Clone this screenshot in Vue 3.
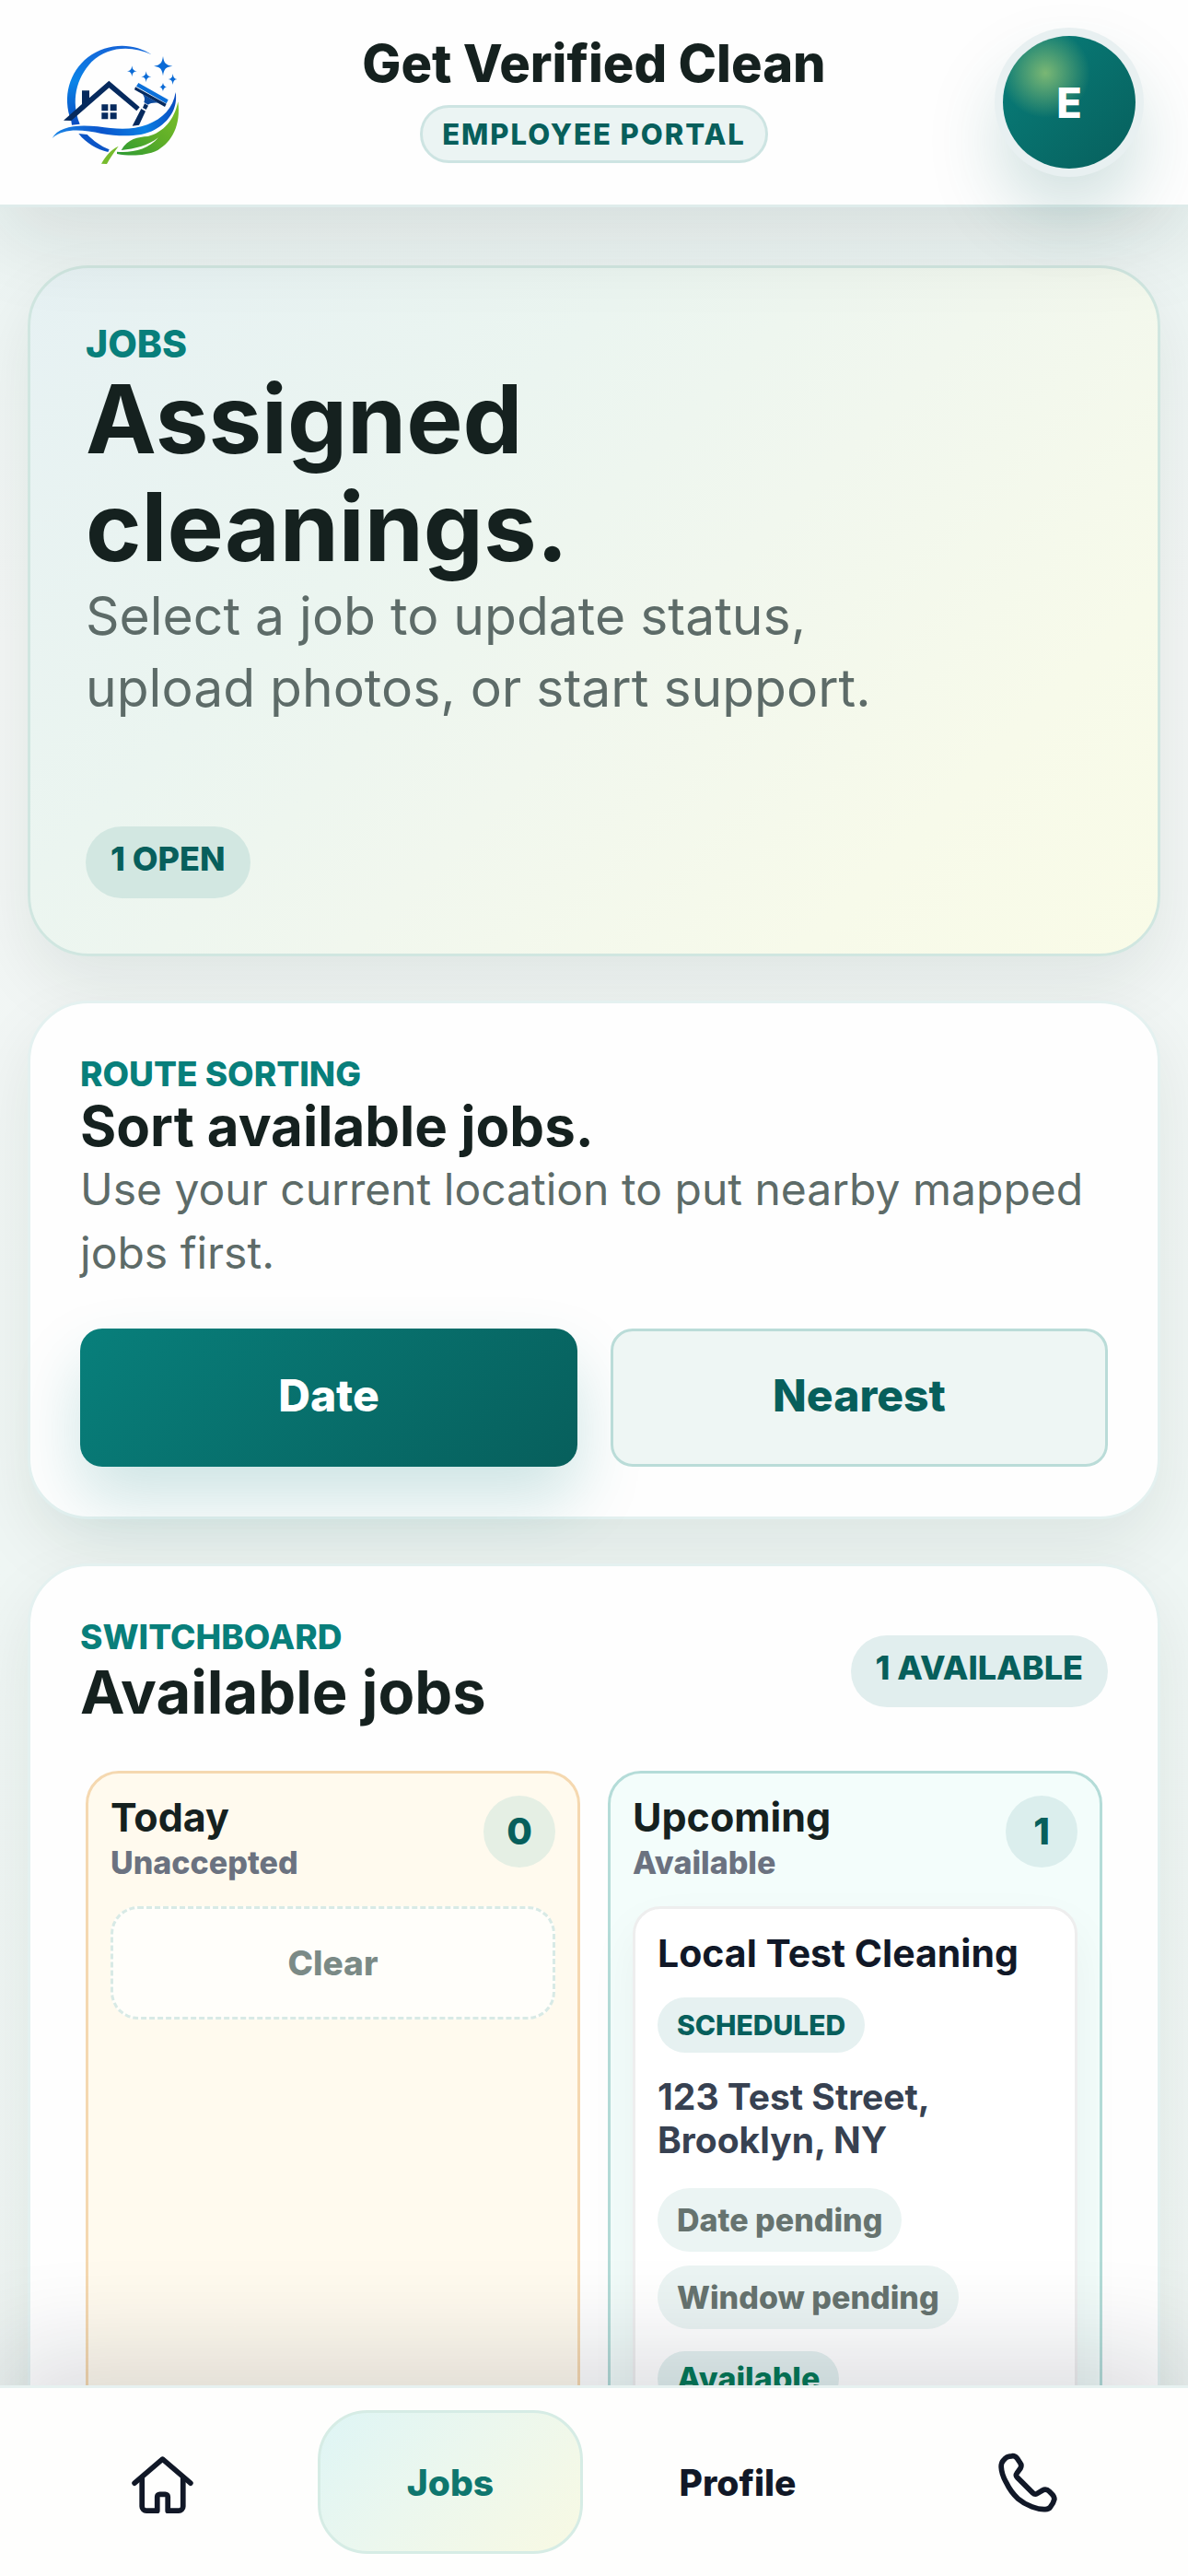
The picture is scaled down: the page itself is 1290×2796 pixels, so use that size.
<template>
  <div class="portal">
    <header class="topbar">
      <a href="#" class="logo" aria-label="Get Verified Clean">
        <svg viewBox="81 27 432 432" fill="none" aria-hidden="true">
          <defs>
            <linearGradient id="arc" x1="0" y1="0" x2="0" y2="1">
              <stop offset="0" stop-color="#1565d8" />
              <stop offset="0.45" stop-color="#0a84e8" />
              <stop offset="1" stop-color="#0a4cc0" />
            </linearGradient>
            <linearGradient id="wave" x1="0" y1="0" x2="1" y2="0">
              <stop offset="0" stop-color="#1b86e6" />
              <stop offset="0.4" stop-color="#0a55cc" />
              <stop offset="0.75" stop-color="#0a80e4" />
              <stop offset="1" stop-color="#0a4cc0" />
            </linearGradient>
            <linearGradient id="leaf" x1="1" y1="0" x2="0" y2="1">
              <stop offset="0" stop-color="#7cc02a" />
              <stop offset="0.5" stop-color="#5fae28" />
              <stop offset="1" stop-color="#2c9a34" />
            </linearGradient>
          </defs>
          <path d="M404 88C350 50 262 46 196 97C136 145 112 225 142 304L144 317L170 314C140 240 158 165 208 112C262 60 340 58 404 88Z" fill="url(#arc)" />
          <path d="M166 345C192 378 226 396 262 405L266 397C238 386 214 368 194 348Z" fill="#0c55c6" />
          <path d="M117 302L177 249V205H201V229L265 173L365 259L355 271L265 196L142 303Z" fill="#062a5e" />
          <path d="M241 250H262V271H241ZM269 250H290V271H269ZM241 277H262V298H241ZM269 277H290V298H269Z" fill="#062a5e" />
          <path d="M361 180L458 235L452 247L354 191Z" fill="#0b70da" />
          <path d="M351 193L452 248L447 258L348 202Z" fill="#062a5e" />
          <path d="M374 216L426 245C410 243 400 246 392 251L379 243C383 232 381 225 374 216Z" fill="#0b4a9e" />
          <path d="M381 247L393 254L386 267L375 261Z" fill="#062a5e" />
          <path d="M370 264L384 272L363 317L341 320Z" fill="#062a5e" />
          <path d="M80 360C100 322 160 314 228 322C290 331 340 334 390 316C440 296 474 262 482 210C490 262 462 306 414 332C370 356 304 356 240 345C178 332 118 326 80 360Z" fill="url(#wave)" />
          <path d="M305 399C326 362 360 356 392 354C442 342 478 300 490 241C500 318 470 372 424 399C380 420 328 418 291 411V404C340 408 392 398 426 358C390 386 350 394 305 399Z" fill="url(#leaf)" />
          <path d="M240 443C256 416 272 397 296 386C282 405 268 425 258 444Z" fill="#76bb2c" />
          <path d="M441 93C444 116 450 122 472 125C450 128 444 134 441 157C438 134 432 128 411 125C432 122 438 116 441 93Z" fill="#0b6bd6" />
          <path d="M340 124C342 137 345 140 356 142C345 144 342 147 340 160C338 147 335 144 324 142C335 140 338 137 340 124Z" fill="#0b6bd6" />
          <path d="M386 142C388 155 391 158 403 160C391 162 388 165 386 178C384 165 381 162 370 160C381 158 384 155 386 142Z" fill="#0b6bd6" />
          <path d="M473 150C475 163 478 166 487 168C478 170 475 173 473 186C471 173 468 170 458 168C468 166 471 163 473 150Z" fill="#0b6bd6" />
          <path d="M441 179C443 189 446 191 454 193C446 195 443 198 441 208C439 198 436 195 429 193C436 191 439 189 441 179Z" fill="#0b6bd6" />
        </svg>
      </a>
      <div class="brand">
        <strong class="brand-name">Get Verified Clean</strong>
        <span class="brand-tag">EMPLOYEE PORTAL</span>
      </div>
      <button type="button" class="avatar" aria-label="Account">E</button>
    </header>

    <main class="content">
      <section class="card hero">
        <p class="eyebrow">JOBS</p>
        <h1>Assigned<br />cleanings.</h1>
        <p class="hero-text">Select a job to update status, upload photos, or start support.</p>
        <span class="status-pill">{{ openCount }} OPEN</span>
      </section>

      <section class="card">
        <p class="eyebrow">ROUTE SORTING</p>
        <h2 class="sort-title">Sort available jobs.</h2>
        <p class="card-text">Use your current location to put nearby mapped jobs first.</p>
        <div class="sort-buttons">
          <button
            v-for="option in sortOptions"
            :key="option"
            type="button"
            :class="['sort-button', { active: sortBy === option }]"
            @click="sortBy = option"
          >
            {{ option }}
          </button>
        </div>
      </section>

      <section class="card">
        <div class="card-head">
          <div>
            <p class="eyebrow">SWITCHBOARD</p>
            <h2 class="board-title">Available jobs</h2>
          </div>
          <span class="status-pill soft">{{ openCount }} AVAILABLE</span>
        </div>

        <div class="board">
          <div v-for="column in columns" :key="column.title" :class="['column', column.tone]">
            <div class="column-head">
              <div>
                <h3>{{ column.title }}</h3>
                <p>{{ column.note }}</p>
              </div>
              <span class="count">{{ column.jobs.length }}</span>
            </div>

            <div v-if="!column.jobs.length" class="empty">Clear</div>

            <article v-for="job in column.jobs" :key="job.name" class="job">
              <h4>{{ job.name }}</h4>
              <span class="tag scheduled">{{ job.status }}</span>
              <p class="address">{{ job.address }}</p>
              <div class="meta">
                <span v-for="item in job.meta" :key="item" class="tag pending">{{ item }}</span>
              </div>
              <span class="tag available">{{ job.state }}</span>
            </article>
          </div>
        </div>
      </section>
    </main>

    <nav class="tabbar" aria-label="Main">
      <a href="#home" class="tab" aria-label="Home">
        <svg viewBox="0 0 24 24" aria-hidden="true">
          <path d="M2.7 12.2 11.700 4.500l9 7.700" />
          <path d="M5.100 10.500v9.200a1.400 1.400 0 0 0 1.400 1.400h3.500v-4.500a.8.8 0 0 1 .8-.8h1.800a.8.8 0 0 1 .8.8v4.500h3.500a1.400 1.400 0 0 0 1.400-1.400v-9.200" />
        </svg>
      </a>
      <a href="#jobs" class="tab active" aria-current="page">Jobs</a>
      <a href="#profile" class="tab">Profile</a>
      <a href="#call" class="tab" aria-label="Call">
        <svg viewBox="0 0 24 24" aria-hidden="true">
          <path d="M7.600 3.500C6.600 3.500 5.500 4 4.900 4.900C4.300 5.500 4.200 6.200 4.200 7C4.300 8.700 4.800 10.200 5.700 11.800C6.700 13.900 7.900 15.700 9.600 17.200C11 18.400 12.500 19.200 14.100 19.800C15.400 20.300 16.700 20.600 18 20.600C19 20.700 19.600 20.500 20 19.900C20.700 19.100 21.100 18.300 21.300 17.400C21.300 16.700 21 16.200 20.500 15.700L19.700 14.900C19 14.200 18.200 14.100 17.500 14.500L15.700 15.600C15.200 15.900 14.700 15.700 14.300 15.300L9.400 10.400C9 10 8.900 9.500 9.200 9.100L10.400 7.400C10.700 6.800 10.700 6.200 10.300 5.700L9.300 4.200C8.900 3.700 8.300 3.400 7.600 3.500Z" />
        </svg>
      </a>
    </nav>
  </div>
</template>

<script setup>
import { ref, computed } from 'vue'

const sortOptions = ['Date', 'Nearest']
const sortBy = ref('Date')

const columns = ref([
  { title: 'Today', note: 'Unaccepted', tone: 'today', jobs: [] },
  {
    title: 'Upcoming',
    note: 'Available',
    tone: 'upcoming',
    jobs: [
      {
        name: 'Local Test Cleaning',
        status: 'SCHEDULED',
        address: '123 Test Street, Brooklyn, NY',
        meta: ['Date pending', 'Window pending'],
        state: 'Available'
      }
    ]
  }
])

const openCount = computed(() => columns.value.reduce((sum, c) => sum + c.jobs.length, 0))
</script>

<style>
html,
body,
#app {
  height: 100%;
}

body {
  margin: 0;
  overflow: hidden;
}
</style>

<style scoped>
.portal {
  display: flex;
  flex-direction: column;
  height: 100%;
  overflow: hidden;
  background: linear-gradient(180deg, #e9f4f2 0%, #f3f6f5 25%, #eff6f4 60%, #eff5f3 100%);
  color: #15211f;
  font-family: Inter, 'Liberation Sans', sans-serif;
}

h1,
h2,
h3,
h4,
p {
  margin: 0;
}

button {
  font-family: inherit;
  cursor: pointer;
}

/* Top bar */
.topbar {
  position: relative;
  z-index: 2;
  flex: none;
  display: flex;
  align-items: flex-start;
  justify-content: space-between;
  padding: 39px 57px;
  border-bottom: 3px solid #dfeceb;
  background: #fefefe;
  box-shadow: 0 36px 90px rgba(16, 32, 30, 0.1);
}

.logo {
  width: 144px;
  height: 144px;
}

.logo svg {
  display: block;
  width: 100%;
  height: 100%;
  overflow: visible;
}

.brand {
  display: flex;
  flex-direction: column;
  align-items: center;
  gap: 15px;
}

.brand-name {
  font-size: 56px;
  font-weight: 800;
  line-height: 60px;
}

.brand-tag {
  padding: 9px 21px;
  border: 3px solid #cde4e2;
  border-radius: 36px;
  background: #ebf4f3;
  color: #075f5c;
  font-size: 31px;
  font-weight: 800;
  line-height: 39px;
  letter-spacing: 2px;
}

.avatar {
  width: 144px;
  height: 144px;
  padding: 0;
  border: 0;
  border-radius: 50%;
  background:
    radial-gradient(circle at 32% 28%, #7ab774 0, rgba(122, 183, 116, 0) 34%),
    linear-gradient(135deg, #087f7b, #075f5c);
  box-shadow:
    0 0 0 9px #e8f0f1,
    0 42px 84px rgba(8, 95, 92, 0.22);
  color: #fff;
  font-size: 45px;
  font-weight: 800;
}

/* Cards */
.content {
  flex: 1;
  min-height: 0;
  display: flex;
  flex-direction: column;
  gap: 48px;
  padding: 63px 30px 0;
}

.card {
  flex: none;
  padding: 54px;
  border: 3px solid #e4f1f0;
  border-radius: 66px;
  background: #fefefe;
  box-shadow: 0 30px 72px rgba(16, 32, 30, 0.08);
}

.eyebrow {
  color: #087f7b;
  font-size: 37px;
  font-weight: 800;
  line-height: 45px;
}

.hero {
  display: flex;
  flex-direction: column;
  align-items: flex-start;
  padding: 60px;
  border-color: #d0e6e0;
  background: linear-gradient(135deg, #e6f1f3 0%, #ebf5f0 34%, #f1f7ee 55%, #f7faea 80%, #f9fbe7 100%);
}

.hero .eyebrow {
  font-size: 41px;
}

h1 {
  font-size: 103px;
  font-weight: 700;
  line-height: 117px;
}

.hero-text {
  max-width: 900px;
  color: #5d6b68;
  font-size: 57px;
  line-height: 78px;
}

.status-pill {
  flex: none;
  padding: 13px 27px 21px;
  border-radius: 39px;
  background: #d2e7e1;
  color: #075f5c;
  font-size: 36px;
  font-weight: 800;
  line-height: 44px;
}

.status-pill.soft {
  background: #e1eeee;
}

.hero .status-pill {
  margin-top: 111px;
}

.sort-title {
  font-size: 60px;
  font-weight: 700;
  line-height: 68px;
}

.card-text {
  color: #5d6b68;
  font-size: 48px;
  line-height: 69px;
}

.sort-buttons {
  display: grid;
  grid-template-columns: 1fr 1fr;
  gap: 36px;
  margin-top: 48px;
}

.sort-button {
  height: 150px;
  padding: 0 0 6px;
  border: 3px solid #badcd8;
  border-radius: 24px;
  background: #eef6f4;
  color: #075f5c;
  font-size: 48px;
  font-weight: 800;
}

.sort-button.active {
  border-color: transparent;
  background: linear-gradient(135deg, #087f7b, #075f5c) border-box;
  box-shadow: 0 36px 72px rgba(8, 127, 123, 0.2);
  color: #fff;
}

.card-head {
  display: flex;
  align-items: center;
  justify-content: space-between;
}

.board-title {
  font-size: 65px;
  font-weight: 700;
  line-height: 75px;
}

/* Switchboard */
.board {
  display: grid;
  grid-template-columns: 1fr 1fr;
  gap: 30px;
  margin-top: 48px;
  padding: 0 6px;
}

.column {
  padding: 24px;
  border: 3px solid #f5d8b0;
  border-radius: 36px;
  background: #fffaee;
}

.column.upcoming {
  border-color: #b4dcd8;
  background: #f3fdfb;
}

.column-head {
  display: flex;
  align-items: flex-start;
  justify-content: space-between;
  height: 120px;
}

h3 {
  font-size: 43px;
  font-weight: 700;
  line-height: 47px;
}

.column-head p {
  margin-top: 3px;
  color: #6b7280;
  font-size: 34px;
  font-weight: 800;
  line-height: 45px;
}

.count {
  width: 78px;
  border-radius: 50%;
  background: #e5efe4;
  color: #075f5c;
  font-size: 40px;
  font-weight: 800;
  line-height: 78px;
  text-align: center;
}

.upcoming .count {
  background: #dbeeed;
}

.empty {
  padding: 36px;
  border: 3px dashed #d8eae6;
  border-radius: 30px;
  background: #fffefa;
  color: #7b8a86;
  font-size: 37px;
  font-weight: 800;
  line-height: 45px;
  text-align: center;
}

.job {
  display: flex;
  flex-direction: column;
  align-items: flex-start;
  gap: 24px;
  padding: 24px;
  border: 3px solid #eeeeee;
  border-radius: 30px;
  background: #fff;
  box-shadow: 0 24px 54px rgba(16, 32, 30, 0.05);
}

h4 {
  color: #111827;
  font-size: 41px;
  font-weight: 700;
  line-height: 48px;
}

.tag {
  padding: 0 21px;
  border-radius: 36px;
  font-size: 34px;
  font-weight: 800;
  line-height: 60px;
}

.scheduled {
  background: #e6f1f1;
  color: #075f5c;
  font-size: 30px;
}

.address {
  padding-bottom: 5px;
  color: #374151;
  font-size: 39px;
  font-weight: 700;
  line-height: 47px;
}

.meta {
  display: flex;
  flex-wrap: wrap;
  gap: 15px;
}

.pending {
  background: #ebf4f3;
  color: #66736f;
  line-height: 69px;
}

.available {
  background: #e3f0ef;
  color: #047857;
}

/* Bottom navigation */
.tabbar {
  position: relative;
  z-index: 2;
  flex: none;
  display: grid;
  grid-template-columns: repeat(4, 1fr);
  gap: 24px;
  padding: 24px 33px;
  border-top: 3px solid #e6f1f0;
  background: #fefefd;
  box-shadow: 0 -36px 108px rgba(17, 24, 39, 0.14);
}

.tab {
  display: flex;
  align-items: center;
  justify-content: center;
  height: 150px;
  border: 3px solid transparent;
  border-radius: 54px;
  color: #111827;
  font-size: 39px;
  font-weight: 800;
  text-decoration: none;
}

.tab.active {
  border-color: #d6ece5;
  background: linear-gradient(135deg, #def5f5, #ebf7ee 45%, #f8f9e3);
  color: #0f766e;
}

.tab svg {
  width: 81px;
  height: 81px;
  fill: none;
  stroke: currentColor;
  stroke-width: 1.7;
  stroke-linecap: round;
  stroke-linejoin: round;
}
</style>
